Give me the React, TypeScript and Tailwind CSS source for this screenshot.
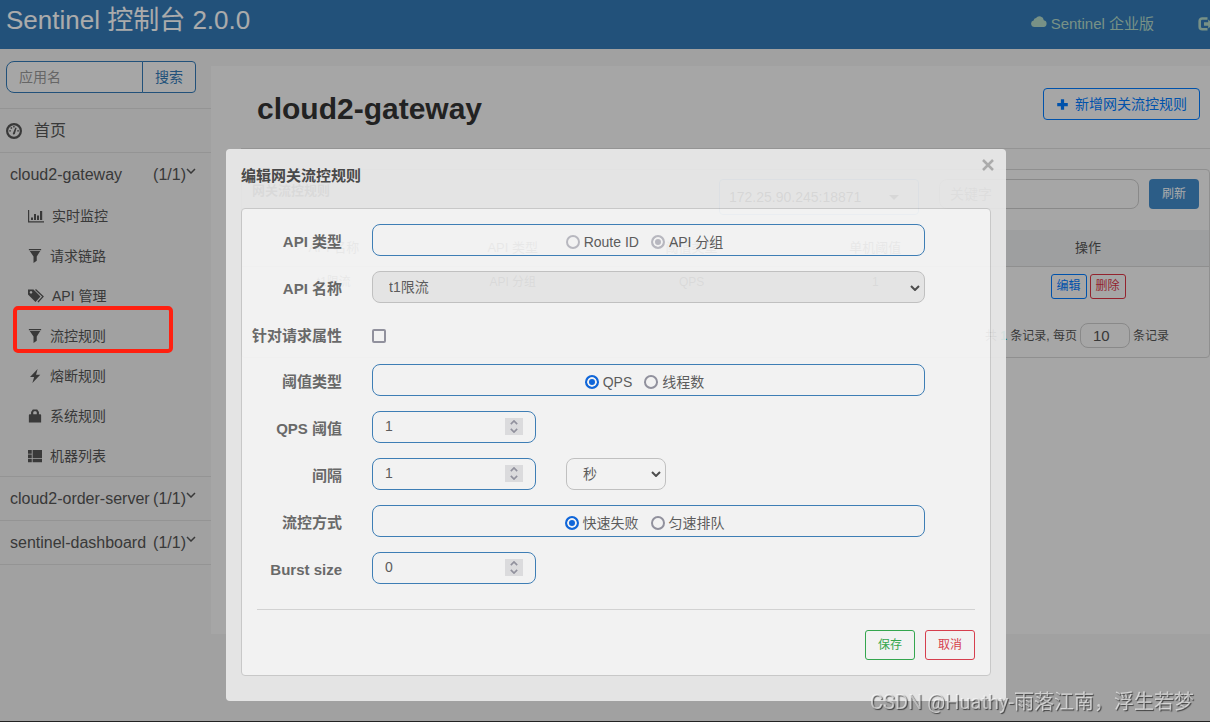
import { useState } from "react";
import type { ReactNode } from "react";

type IconName =
  | "dashboard"
  | "stats"
  | "filter"
  | "tags"
  | "flash"
  | "lock"
  | "list"
  | "cloud"
  | "logout"
  | "plus";

// 16x16 solid glyphs
const ICONS: Record<IconName, ReactNode> = {
  dashboard: (
    <>
      <circle cx="8" cy="8" r="6.900" fill="none" stroke="currentColor" strokeWidth="2.200" />
      <path d="M6.800 10.400 9.400 4.600l1.200.4-1.800 6.100a1.100 1.100 0 0 1-2-.7Z" />
      <path d="M3.200 7.200h1.700v1.400H3.200zM11.200 7.200h1.700v1.400h-1.700zM4.600 4.200h1.500v1.500H4.600zM7.200 3h1.400v1.400H7.200z" />
    </>
  ),
  stats: (
    <path d="M0 2h1.200v11.200H16v1.200H0zM3 9.500h2V12H3zM6 6h2v6H6zM9 7.500h2V12H9zM12 3h2.200v9H12z" />
  ),
  filter: <path d="M1 0h14v1.300H1zM2 2.300h12L10 8.500v5L6.300 16V8.500z" />,
  tags: (
    <>
      <path d="M0 1.500h5.500l7 7-5 5.500L0 6.500zM3 3a1.300 1.300 0 1 0 .01 0z" fillRule="evenodd" />
      <path d="M7.500 1.500 15 8.600l-5 5.400" fill="none" stroke="currentColor" strokeWidth="1.300" />
    </>
  ),
  flash: <path d="M11 0 2.300 9H7l-2 7L14 6.500H9.200z" />,
  lock: (
    <path
      d="M3.500 6V3.500L5.500.5h5l2 3V6H14a1 1 0 0 1 1 1v8.500H1V7a1 1 0 0 1 1-1zM6 6h4V3.800l-.8-1.300H6.800L6 3.800z"
      fillRule="evenodd"
    />
  ),
  list: <path d="M0 1h4.300v4.300H0zM5.300 1H16v9.500H5.300zM0 6.200h4.300v4.300H0zM0 11.500h4.300V15H0zM5.300 11.500H16V15H5.300z" />,
  cloud: (
    <path d="M3.400 13A3.300 3.300 0 0 1 2.600 6.500 3 3 0 0 1 5 4 4.400 4.400 0 0 1 12.800 6.300 3.400 3.400 0 0 1 12.700 13z" />
  ),
  logout: (
    <>
      <path d="M9.500 2.500H4.200A2.500 2.500 0 0 0 1.700 5v5.800a2.500 2.500 0 0 0 2.500 2.500h5.300" fill="none" stroke="currentColor" strokeWidth="2.600" />
      <path d="M6 6.200h4.200V3.500L15.800 8l-5.600 4.500V9.800H6z" />
    </>
  ),
  plus: <path d="M6 1.500h4V6h4.500v4H10v4.500H6V10H1.500V6H6z" />,
};

function Icon({ name, className = "size-4" }: { name: IconName; className?: string }) {
  return (
    <svg viewBox="0 0 16 16" fill="currentColor" className={`shrink-0 ${className}`} aria-hidden>
      {ICONS[name]}
    </svg>
  );
}

function Chevron({ className = "" }: { className?: string }) {
  return (
    <svg
      viewBox="0 0 10 6"
      fill="none"
      stroke="currentColor"
      className={`pointer-events-none shrink-0 ${className}`}
      aria-hidden
    >
      <path d="m1 1 4 4 4-4" />
    </svg>
  );
}

const MENU: { icon: IconName; label: string; active?: boolean }[] = [
  { icon: "stats", label: "实时监控" },
  { icon: "filter", label: "请求链路" },
  { icon: "tags", label: "API 管理" },
  { icon: "filter", label: "流控规则", active: true },
  { icon: "flash", label: "熔断规则" },
  { icon: "lock", label: "系统规则" },
  { icon: "list", label: "机器列表" },
];

function AppRow({ name }: { name: string }) {
  return (
    <a href="#app" className="flex h-[43px] items-center pr-[15px] pl-[10px] text-base whitespace-nowrap">
      <span className="flex-1">{name}</span>
      <span>(1/1)</span>
      <Chevron className="mb-2 h-[6px] w-[10px] stroke-[1.5]" />
    </a>
  );
}

function Sidebar() {
  return (
    <nav className="w-[211px] shrink-0 text-[#555]">
      <form className="flex h-[59px] items-start px-[6px] pt-3" onSubmit={(e) => e.preventDefault()}>
        <input
          aria-label="应用名"
          placeholder="应用名"
          className="h-8 w-[137px] rounded-l-lg border border-[#337ab7] bg-[#f8f8f8] px-3 text-sm placeholder:text-[#999]"
        />
        <button className="-ml-px h-8 w-[54px] rounded-r border border-[#337ab7] bg-[#f8f8f8] text-sm text-[#337ab7]">
          搜索
        </button>
      </form>
      <a href="#home" className="flex h-11 items-center gap-3 border-t border-[#ddd] px-[6px] text-base">
        <Icon name="dashboard" />
        首页
      </a>
      <div className="border-t border-[#ddd]">
        <AppRow name="cloud2-gateway" />
        <ul>
          {MENU.map((m) => (
            <li key={m.label} className="relative">
              <a href="#menu" className="flex h-10 items-center gap-2 pl-7 text-sm">
                <Icon name={m.icon} className={m.icon === "stats" || m.icon === "tags" ? "size-4" : "size-[14px]"} />
                {m.label}
              </a>
              {m.active ? (
                <span className="pointer-events-none absolute -top-[10px] left-[13px] z-20 h-[47px] w-40 rounded-[5px] border-4 border-[#ff2010]" />
              ) : null}
            </li>
          ))}
        </ul>
      </div>
      <div className="border-t border-[#ddd]">
        <AppRow name="cloud2-order-server" />
      </div>
      <div className="border-y border-[#ddd]">
        <AppRow name="sentinel-dashboard" />
      </div>
    </nav>
  );
}

function RulesPage() {
  return (
    <main className="mt-[17px] h-[568px] min-w-0 flex-1 bg-[#f8f8f8] pl-[30px]">
      <div className="flex items-start justify-between border-b border-[#ddd] pt-[22px] pr-[10px] pb-[18px] pl-4">
        <h1 className="text-[30px] leading-[42px] font-bold text-[#333]">cloud2-gateway</h1>
        <button className="flex h-8 items-center gap-[6px] rounded border border-[#007bff] px-3 text-sm whitespace-nowrap text-[#007bff]">
          <Icon name="plus" className="size-[13px]" />
          新增网关流控规则
        </button>
      </div>

      <section className="mt-5 rounded border border-[#d5d5d5] text-[#555]">
        <div className="flex h-[60px] items-start gap-5 pt-[9px] pr-[10px] pl-[10px]">
          <span className="flex-1 pt-[2px] text-[13px] font-bold">网关流控规则</span>
          <button className="flex h-9 w-[200px] items-center justify-between rounded border border-[#80b0e0] px-[9px] text-sm text-[#222]">
            172.25.90.245:18871
            <svg viewBox="0 0 10 5" className="mr-[10px] h-[5px] w-[10px]" fill="#333" aria-hidden>
              <path d="M0 0h10L5 5z" />
            </svg>
          </button>
          <input
            aria-label="关键字"
            placeholder="关键字"
            className="h-[30px] w-[200px] rounded-lg border border-[#ccc] px-[10px] text-sm placeholder:text-[#888]"
          />
          <button className="-ml-[10px] h-[30px] w-[50px] rounded bg-[#428bca] text-xs text-white">刷新</button>
        </div>
        <table className="w-full table-fixed text-center text-[13px]">
          <thead>
            <tr className="h-9 border-b border-[#d5d5d5] bg-[#ecedef]">
              <th className="w-[19%] font-normal">API 名称</th>
              <th className="w-[18%] font-normal">API 类型</th>
              <th className="w-[19%] font-normal">阈值类型</th>
              <th className="w-[19%] font-normal">单机阈值</th>
              <th className="w-[25%] font-normal">操作</th>
            </tr>
          </thead>
          <tbody>
            <tr className="h-10 text-xs">
              <td className="pb-2">t1限流</td>
              <td className="pb-2">API 分组</td>
              <td className="pb-2">QPS</td>
              <td className="pb-2">1</td>
              <td>
                <div className="flex justify-center gap-[3px]">
                  <button className="h-[25px] w-9 rounded-[3px] border border-[#007bff] text-[#007bff]">编辑</button>
                  <button className="h-[25px] w-9 rounded-[3px] border border-[#dc3545] text-[#dc3545]">删除</button>
                </div>
              </td>
            </tr>
          </tbody>
        </table>
        <div className="flex items-center justify-end gap-[3px] pt-[17px] pr-10 pb-[9px] text-xs">
          <span>
            共 <b className="text-[#1ab394]">1</b> 条记录, 每页
          </span>
          <input
            aria-label="每页条数"
            defaultValue="10"
            className="h-[25px] w-[50px] rounded-lg border border-[#ccc] px-3 text-[15px]"
          />
          <span>条记录</span>
        </div>
      </section>
    </main>
  );
}

function Row({ label, htmlFor, children }: { label: string; htmlFor?: string; children: ReactNode }) {
  const text = "w-[100px] shrink-0 pt-1 text-right text-[15px] leading-8 font-bold whitespace-nowrap text-[#636363]";
  return (
    <div className="flex h-8 items-center gap-[30px] pr-[65px]">
      {htmlFor ? (
        <label htmlFor={htmlFor} className={text}>
          {label}
        </label>
      ) : (
        <span className={text}>{label}</span>
      )}
      {children}
    </div>
  );
}

function RadioBox({
  name,
  label,
  options,
  initial,
  disabled = false,
}: {
  name: string;
  label: string;
  options: string[];
  initial: string;
  disabled?: boolean;
}) {
  const [value, setValue] = useState(initial);
  return (
    <div
      role="radiogroup"
      aria-label={label}
      className="flex h-8 flex-1 items-center justify-center gap-3 rounded-lg border border-[#337ab7] pt-[3px] pr-2 text-sm text-[#555]"
    >
      {options.map((o) => (
        <label key={o} className="flex items-center gap-1">
          <input
            type="radio"
            name={name}
            checked={value === o}
            disabled={disabled}
            onChange={() => setValue(o)}
            className="size-[14px] appearance-none rounded-full border-2 border-[#8f8f9d] checked:border-[#0060df] checked:bg-[#0060df] checked:shadow-[inset_0_0_0_2px_#fbfbfb] disabled:border-[#8f8f9d] disabled:opacity-60 disabled:checked:bg-[#8f8f9d]"
          />
          {o}
        </label>
      ))}
    </div>
  );
}

function NumberBox({ id, initial }: { id: string; initial: number }) {
  const [value, setValue] = useState(initial);
  return (
    <div className="relative w-[164px]">
      <input
        id={id}
        type="number"
        value={value}
        onChange={(e) => setValue(Number(e.target.value))}
        className="block h-8 w-full appearance-none rounded-lg border border-[#337ab7] px-3 pb-[2px] text-sm text-[#555] [-moz-appearance:textfield] [&::-webkit-inner-spin-button]:appearance-none"
      />
      <span className="pointer-events-none absolute top-[7px] right-[13px] flex h-[17px] w-[18px] flex-col items-center justify-between bg-[#e2e2e4] py-[2px] text-[#8f8f9d]">
        <Chevron className="h-[5px] w-2 rotate-180 stroke-2" />
        <Chevron className="h-[5px] w-2 stroke-2" />
      </span>
    </div>
  );
}

function RuleDialog() {
  return (
    <div className="fixed inset-0 z-30 flex items-start justify-center pt-[149px] pl-[22px]">
      <div
        role="dialog"
        aria-label="编辑网关流控规则"
        className="relative w-full max-w-[780px] rounded bg-[#ececec] px-[15px] pb-[25px] opacity-90"
      >
        <button
          aria-label="关闭"
          className="absolute top-[10px] right-3 flex size-3 items-center justify-center text-[#acacac]"
        >
          <svg viewBox="0 0 12 12" className="size-3" fill="none" stroke="currentColor" strokeWidth="2.500" aria-hidden>
            <path d="m1 1 10 10M11 1 1 11" />
          </svg>
        </button>
        <h2 className="h-[59px] pt-[15px] text-[15px] leading-6 font-bold text-[#404040]">编辑网关流控规则</h2>
        <form
          className="flex flex-col gap-[15px] rounded border border-[#ccc] bg-[#fbfbfb] py-[15px]"
          onSubmit={(e) => e.preventDefault()}
        >
          <Row label="API 类型">
            <RadioBox name="mode" label="API 类型" options={["Route ID", "API 分组"]} initial="API 分组" disabled />
          </Row>
          <Row label="API 名称" htmlFor="api">
            <div className="relative flex-1">
              <select
                id="api"
                disabled
                className="block h-8 w-full appearance-none rounded-lg border border-[#c4c4c4] bg-[#ebebeb] px-4 text-sm text-[#555] opacity-100"
              >
                <option>t1限流</option>
              </select>
              <Chevron className="absolute top-[14px] right-[5px] h-[6px] w-[10px] stroke-2 text-[#444]" />
            </div>
          </Row>
          <Row label="针对请求属性" htmlFor="attr">
            <input
              id="attr"
              type="checkbox"
              className="mt-1 size-[14px] appearance-none rounded-[2px] border-2 border-[#8f8f9d] checked:bg-[#0060df]"
            />
          </Row>
          <div className="-mt-px flex flex-col gap-[15px]">
            <Row label="阈值类型">
              <RadioBox name="grade" label="阈值类型" options={["QPS", "线程数"]} initial="QPS" />
            </Row>
            <Row label="QPS 阈值" htmlFor="count">
              <NumberBox id="count" initial={1} />
            </Row>
            <Row label="间隔" htmlFor="interval">
              <NumberBox id="interval" initial={1} />
              <div className="relative w-[100px]">
                <select
                  aria-label="间隔单位"
                  className="block h-8 w-full appearance-none rounded-lg border border-[#c4c4c4] px-4 text-sm text-[#555]"
                >
                  <option>秒</option>
                  <option>分</option>
                  <option>时</option>
                  <option>天</option>
                </select>
                <Chevron className="absolute top-[13px] right-[5px] h-[6px] w-[10px] stroke-2 text-[#444]" />
              </div>
            </Row>
            <Row label="流控方式">
              <RadioBox name="behavior" label="流控方式" options={["快速失败", "匀速排队"]} initial="快速失败" />
            </Row>
            <Row label="Burst size" htmlFor="burst">
              <NumberBox id="burst" initial={0} />
            </Row>
          </div>
          <div className="mx-[15px] mt-[10px] flex justify-end gap-[10px] border-t border-[#d8d8d8] pt-5 text-xs">
            <button className="h-[30px] w-[50px] rounded-[3px] border border-[#28a745] text-[#28a745]">保存</button>
            <button type="button" className="h-[30px] w-[50px] rounded-[3px] border border-[#dc3545] text-[#dc3545]">
              取消
            </button>
          </div>
        </form>
      </div>
    </div>
  );
}

export default function App() {
  return (
    <div className="min-h-screen overflow-hidden border-b border-[#333] bg-[#f0f0f0] font-['Liberation_Sans','Noto_Sans_CJK_SC',sans-serif]">
      <header className="flex h-[49px] items-start justify-between bg-[#337ab7] pl-[6px]">
        <h2 className="text-[26px] leading-10 whitespace-nowrap text-white">Sentinel 控制台 2.0.0</h2>
        <div className="-mr-1 flex gap-11 text-[15px] leading-[47px] whitespace-nowrap text-[#b3d9c8]">
          <a href="#enterprise" className="flex items-center gap-1">
            <Icon name="cloud" className="mb-1 size-4" />
            Sentinel 企业版
          </a>
          <a href="#logout" aria-label="退出" className="flex items-center">
            <Icon name="logout" />
          </a>
        </div>
      </header>
      <div className="flex">
        <Sidebar />
        <RulesPage />
      </div>

      <div className="fixed inset-0 z-10 bg-black/33" />
      <RuleDialog />
      <div className="pointer-events-none fixed right-4 bottom-[5px] z-40 font-['Roboto','Noto_Sans_CJK_SC',sans-serif] text-xl leading-[30px] whitespace-nowrap text-white/60 [text-shadow:1px_1px_1px_rgba(0,0,0,0.6)]">
        CSDN @Huathy-雨落江南，浮生若梦
      </div>
    </div>
  );
}
